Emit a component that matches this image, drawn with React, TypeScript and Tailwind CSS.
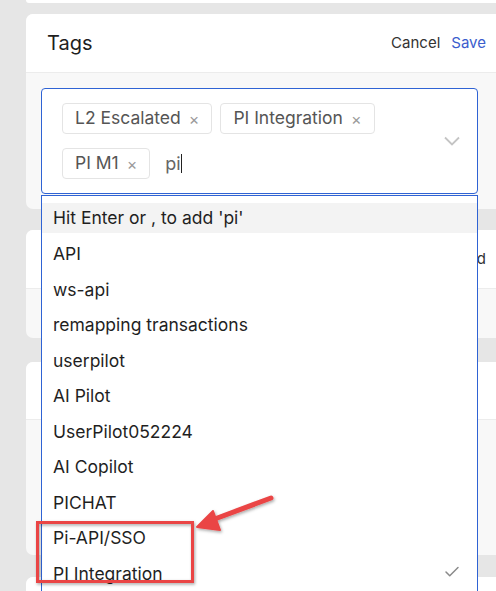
import { Check } from 'lucide-react'

const chips = ['L2 Escalated', 'PI Integration', 'PI M1']
const options = ['API', 'ws-api', 'remapping transactions', 'userpilot', 'AI Pilot', 'UserPilot052224', 'AI Copilot', 'PICHAT', 'Pi-API/SSO', 'PI Integration']

function Chip({ label }: { label: string }) {
  return (
    <div className="h-[31px] flex items-center pl-[12px] pr-[12px] border border-[#e4e4e4] rounded-[4px] bg-white text-[17.5px] text-[#555]">
      <span>{label}</span>
      <span className="ml-[8px] text-[16px] text-[#9a9a9a]">×</span>
    </div>
  )
}

function Card({ title, action, headerH, bodyH, children }: { title?: string, action?: React.ReactNode, headerH: string, bodyH?: string, children?: React.ReactNode }) {
  return (
    <div className="w-[480px] rounded-[7px] bg-[#f8f8f8]">
      <div className={`${headerH} bg-white rounded-t-[7px] border-b border-[#ececec] flex items-center justify-between pl-[21px] pr-[20px]`}>
        <span className="text-[20px] text-[#1f1f1f]">{title}</span>
        {action}
      </div>
      <div className={`${bodyH ?? ''} rounded-b-[7px]`}>{children}</div>
    </div>
  )
}

export default function App() {
  return (
    <div className="relative w-[496px] h-[591px] overflow-hidden bg-[#e6e6e6] font-['Inter','Liberation_Sans',sans-serif]">
      <div className="pl-[26px]">
        <div className="h-[3px] w-[480px] bg-white rounded-b-[4px]" />
        <div className="mt-[11px]">
          <Card
            title="Tags"
            headerH="h-[59px]"
            action={
              <div className="flex gap-[11px] text-[15px]">
                <span className="text-[#333]">Cancel</span>
                <span className="text-[#3b5dcd]">Save</span>
              </div>
            }
          >
            <div className="p-[15px]">
              <div className="relative w-[437px]">
                <div className="h-[106px] border border-[#2f63d4] rounded-[4px] bg-white flex items-center pl-[20px] pr-[17px]">
                  <div className="w-[360px] flex flex-wrap gap-x-[8px] gap-y-[14px] items-center">
                    {chips.map(c => <Chip key={c} label={c} />)}
                    <div className="flex items-center ml-[7px] text-[18px] text-[#666]">
                      <span>pi</span>
                      <span className="w-[1.5px] h-[19px] bg-[#222]" />
                    </div>
                  </div>
                  <svg className="ml-auto" width="16" height="10" viewBox="0 0 16 10">
                    <polyline points="1,1.5 8,8.5 15,1.5" fill="none" stroke="#c4c4c4" strokeWidth="1.8" />
                  </svg>
                </div>

                <div className="absolute z-10 left-0 right-0 top-[107px] h-[420px] bg-white border-t border-x border-[#2f63d4] pt-[7px] text-[17.5px] text-[#1f1f1f]">
                  <div className="h-[30px] mb-[3.5px] bg-[#f3f3f3] flex items-center pl-[11px]">Hit Enter or , to add 'pi'</div>
                  {options.map((o, i) => (
                    <div key={o} className="h-[35.5px] flex items-center justify-between pl-[11px] pr-[16px]">
                      <span>{o}</span>
                      {i === options.length - 1 && <Check className="text-[#8a8a8a] -mt-[4px]" size={18} strokeWidth={2} />}
                    </div>
                  ))}
                </div>
              </div>
            </div>
          </Card>
        </div>

        <div className="mt-[21px]">
          <Card headerH="h-[59px]" bodyH="h-[49px]" action={<span className="text-[15px] text-[#333]">Add</span>} />
        </div>
        <div className="mt-[24px]">
          <Card headerH="h-[58px]" bodyH="h-[135px]" />
        </div>
        <div className="mt-[22px]">
          <Card headerH="h-[58px]" bodyH="h-[60px]" />
        </div>
      </div>

      <svg className="absolute left-0 top-0 z-20 pointer-events-none" width="496" height="591">
        <defs>
          <filter id="sh" x="-20%" y="-20%" width="140%" height="140%">
            <feDropShadow dx="1" dy="1.5" stdDeviation="1.5" floodColor="#000" floodOpacity="0.35" />
          </filter>
        </defs>
        <g filter="url(#sh)">
          <rect x="37.5" y="522.5" width="155" height="59" fill="none" stroke="#ea4545" strokeWidth="3" />
          <line x1="271" y1="498" x2="212" y2="520" stroke="#ea4545" strokeWidth="5" strokeLinecap="round" />
          <polygon points="197,527 213,511 220,530" fill="#ea4545" stroke="#ea4545" strokeWidth="2" strokeLinejoin="round" />
        </g>
      </svg>
    </div>
  )
}
